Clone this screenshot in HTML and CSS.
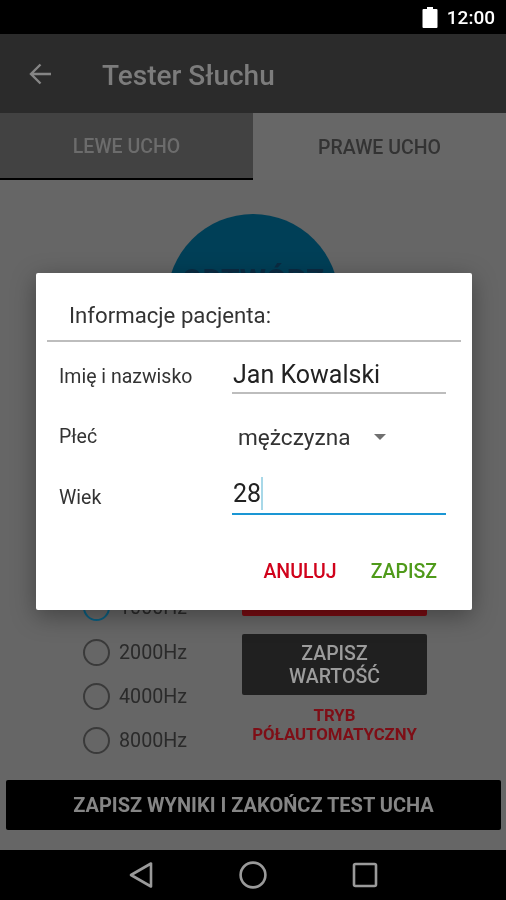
FILE: index.html
```html
<!DOCTYPE html>
<html lang="pl">
<head>
  <meta charset="UTF-8" />
  <meta name="viewport" content="width=device-width, initial-scale=1.0"/>
  <title>Tester Słuchu</title>
  <link rel="stylesheet" href="styles.css">
</head>
<body>
  <div class="screen">
    <div class="status-bar">
      <svg class="battery" width="16" height="21" viewBox="0 0 16 21"><path d="M5 0h6v2h3.5a1 1 0 0 1 1 1v17a1 1 0 0 1-1 1h-13a1 1 0 0 1-1-1V3a1 1 0 0 1 1-1H5z" fill="#fff"/></svg>
      <span class="clock">12:00</span>
    </div>

    <div class="toolbar">
      <svg class="back" width="24" height="24" viewBox="0 0 24 24"><path d="M23 12H3M12.5 2.5L3 12l9.5 9.5" fill="none" stroke="#858585" stroke-width="2.4"/></svg>
      <span class="toolbar-title">Tester Słuchu</span>
    </div>

    <div class="tabs">
      <div class="tab tab-active">LEWE UCHO</div>
      <div class="tab">PRAWE UCHO</div>
    </div>

    <div class="test-area">
      <div class="play-circle">ODTWÓRZ</div>

      <div class="controls">
        <div class="freq-list">
          <div class="freq freq-checked"><span class="radio"></span>1000Hz</div>
          <div class="freq"><span class="radio"></span>2000Hz</div>
          <div class="freq"><span class="radio"></span>4000Hz</div>
          <div class="freq"><span class="radio"></span>8000Hz</div>
        </div>
        <div class="actions">
          <div class="btn btn-red"></div>
          <div class="btn btn-dark">ZAPISZ<br>WARTOŚĆ</div>
          <div class="mode">TRYB<br>PÓŁAUTOMATYCZNY</div>
        </div>
      </div>

      <div class="finish-btn">ZAPISZ WYNIKI I ZAKOŃCZ TEST UCHA</div>
    </div>

    <div class="nav-bar">
      <svg width="26" height="28" viewBox="0 0 26 28"><path d="M23 2.5v23L3 14z" fill="none" stroke="#9a9a9a" stroke-width="2.6" stroke-linejoin="round"/></svg>
      <svg width="28" height="28" viewBox="0 0 28 28"><circle cx="14" cy="14" r="12.4" fill="none" stroke="#9a9a9a" stroke-width="2.6"/></svg>
      <svg width="26" height="26" viewBox="0 0 26 26"><rect x="2" y="2" width="22" height="22" rx="1.5" fill="none" stroke="#9a9a9a" stroke-width="2.6"/></svg>
    </div>

    <div class="dialog">
      <div class="dialog-title">Informacje pacjenta:</div>
      <div class="form">
        <label class="form-label">Imię i nazwisko</label>
        <div class="field">Jan Kowalski</div>
        <label class="form-label">Płeć</label>
        <div class="select">mężczyzna<span class="arrow"></span></div>
        <label class="form-label">Wiek</label>
        <div class="field field-focus">28<span class="caret"></span></div>
      </div>
      <div class="dialog-buttons">
        <span class="cancel">ANULUJ</span>
        <span class="save">ZAPISZ</span>
      </div>
    </div>
  </div>
</body>
</html>
```

FILE: styles.css
```css
* {
  box-sizing: border-box;
}
body {
  margin: 0;
  font-family: Roboto, sans-serif;
  background: #666;
}
.screen {
  position: relative;
  width: 506px;
  height: 900px;
  display: flex;
  flex-direction: column;
  overflow: hidden;
  filter: blur(0.4px);
}
.status-bar {
  height: 34px;
  background: #000;
  display: flex;
  align-items: center;
  justify-content: flex-end;
  padding-right: 11px;
  color: #fff;
}
.battery {
  margin-right: 9px;
}
.clock {
  font-size: 19px;
  font-weight: 500;
}
.toolbar {
  height: 79px;
  background: #2b2b2b;
  display: flex;
  align-items: center;
  padding-left: 28px;
}
.toolbar-title {
  margin: 3px 0 0 50px;
  font-size: 28px;
  font-weight: 500;
  color: #7c7c7c;
}
.tabs {
  height: 67px;
  display: flex;
  background: #676767;
}
.tab {
  flex: 1;
  display: flex;
  align-items: center;
  justify-content: center;
  padding-top: 2px;
  font-size: 19.5px;
  font-weight: 500;
  color: #333;
}
.tab-active {
  background: #424242;
  color: #6c6c6c;
  border-bottom: 2px solid #000;
}
.test-area {
  flex: 1;
  display: flex;
  flex-direction: column;
  background: #666;
}
.play-circle {
  width: 172px;
  height: 172px;
  margin: 34px auto 0;
  padding-top: 48px;
  border-radius: 50%;
  background: #003f57;
  color: #0b2b42;
  font-size: 30px;
  font-weight: 700;
  text-align: center;
}
.controls {
  margin-top: auto;
  display: flex;
  padding-left: 83px;
}
.freq-list {
  width: 159px;
}
.freq {
  height: 44.3px;
  display: flex;
  align-items: center;
  gap: 9px;
  font-size: 19.7px;
  color: #2a2a2a;
}
.radio {
  width: 27px;
  height: 27px;
  border: 2.4px solid #3a3a3a;
  border-radius: 50%;
}
.freq-checked .radio {
  border-color: #0b5f80;
}
.actions {
  width: 185px;
  text-align: center;
}
.btn {
  border-radius: 2px;
}
.btn-red {
  height: 30px;
  background: #7a0c12;
}
.btn-dark {
  height: 61px;
  margin-top: 18px;
  padding-top: 8px;
  background: #202020;
  color: #9c9c9c;
  font-size: 19.5px;
  font-weight: 500;
  line-height: 23px;
}
.mode {
  margin-top: 11px;
  color: #7e0e16;
  font-size: 16.8px;
  font-weight: 700;
  line-height: 19.5px;
}
.finish-btn {
  height: 50px;
  margin: 17px 5px 20px 6px;
  border-radius: 2px;
  background: #000;
  color: #858585;
  font-size: 20px;
  font-weight: 700;
  display: flex;
  align-items: center;
  justify-content: center;
}
.nav-bar {
  height: 50px;
  background: #000;
  display: flex;
  align-items: center;
  justify-content: center;
  gap: 85px;
}
.dialog {
  position: absolute;
  top: 273px;
  left: 36px;
  width: 436px;
  height: 337px;
  padding: 0 11px;
  background: #fff;
  border-radius: 2px;
  box-shadow: 0 6px 24px rgba(0, 0, 0, 0.35);
}
.dialog-title {
  height: 69px;
  padding: 28px 0 0 22px;
  border-bottom: 2px solid #bdbdbd;
  font-size: 22.2px;
  line-height: 28px;
  color: #333;
}
.form {
  display: grid;
  grid-template-columns: 173px 214px;
  grid-template-rows: 52px 60px 61px;
  padding-left: 12px;
  align-items: end;
}
.form-label {
  padding-bottom: 4px;
  font-size: 19.5px;
  line-height: 26px;
  color: #333;
}
.field {
  position: relative;
  height: 36px;
  padding-left: 1px;
  border-bottom: 2px solid #bdbdbd;
  font-size: 25px;
  line-height: 34px;
  color: #222;
}
.field-focus {
  border-bottom-color: #1a96d4;
  line-height: 30px;
}
.caret {
  position: absolute;
  top: -2px;
  left: 29px;
  width: 2px;
  height: 33px;
  background: #a8d8e8;
}
.select {
  height: 34px;
  padding-left: 6px;
  display: flex;
  align-items: center;
  font-size: 22.6px;
  color: #333;
}
.arrow {
  margin-left: 23px;
  border-top: 6px solid #707070;
  border-left: 6px solid transparent;
  border-right: 6px solid transparent;
}
.dialog-buttons {
  display: flex;
  justify-content: flex-end;
  gap: 34px;
  padding: 45px 24px 0 0;
  font-size: 19.5px;
  font-weight: 500;
}
.cancel {
  color: #d0021b;
}
.save {
  color: #4f9a1a;
}
```
